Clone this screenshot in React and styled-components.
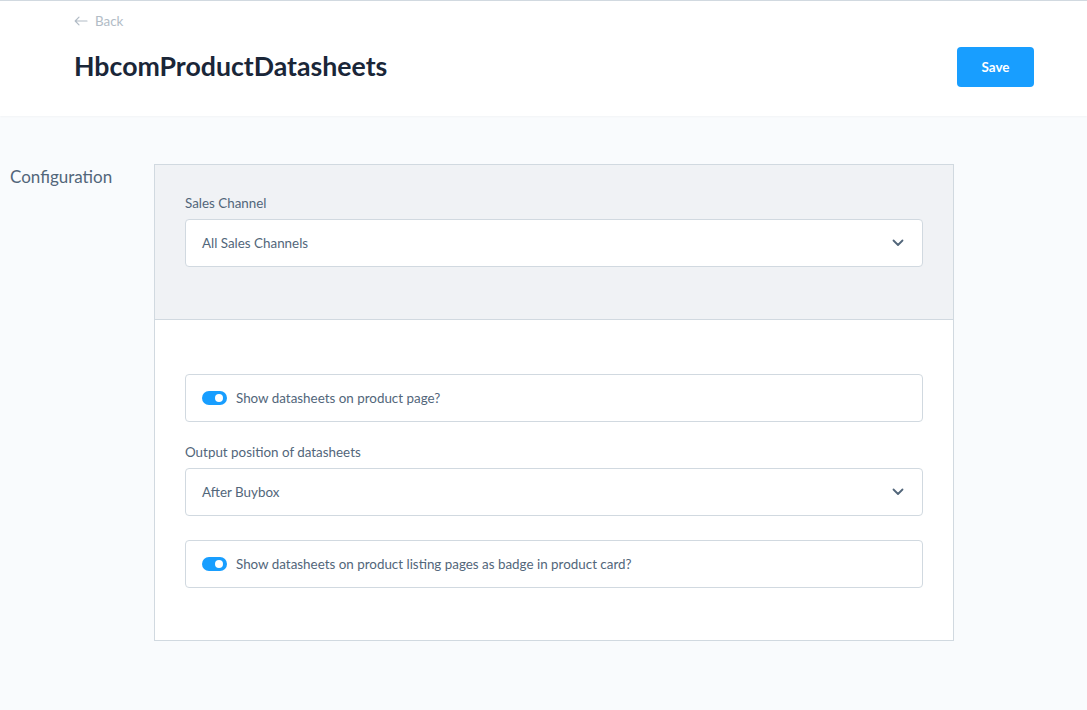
import React from 'react';
import styled, { createGlobalStyle } from 'styled-components';

const GlobalStyle = createGlobalStyle`
  html, body {
    margin: 0;
    padding: 0;
    background: #f9fafb;
    font-family: "Source Sans Pro", Lato, "Noto Sans", sans-serif;
    color: #52667a;
  }
  * { box-sizing: border-box; }
`;

const Page = styled.div`
  min-height: 710px;
  background: #f9fbfd;
  border-top: 1px solid #d1d9e0;
`;

const Header = styled.header`
  height: 115px;
  background: #ffffff;
  box-shadow: 0 1px 2px rgba(0, 0, 0, 0.03);
  padding: 12px 53px 0 74px;
  display: flex;
  justify-content: space-between;
  align-items: flex-start;
`;

const HeaderLeft = styled.div`
  display: flex;
  flex-direction: column;
`;

const BackLink = styled.a`
  display: flex;
  align-items: center;
  gap: 7px;
  font-size: 13.4px;
  color: #b2bcc6;
  height: 16px;
  text-decoration: none;
`;

const Title = styled.h1`
  margin: 21px 0 0;
  font-size: 26.7px;
  font-weight: 700;
  color: #1a2638;
`;

const SaveButton = styled.button`
  margin-top: 34px;
  width: 77px;
  height: 40px;
  border: none;
  border-radius: 4px;
  background: #189eff;
  color: #ffffff;
  font-family: inherit;
  font-size: 13.4px;
  font-weight: 700;
  cursor: pointer;
`;

const Content = styled.main`
  display: flex;
  padding: 48px 0 0 10px;
`;

const SideLabel = styled.div`
  width: 144px;
  font-size: 17px;
  color: #52667a;
  padding-top: 2px;
`;

const Card = styled.div`
  width: 800px;
  border: 1px solid #d1d9e0;
  background: #ffffff;
`;

const Section = styled.div`
  background: ${p => (p.$muted ? '#f0f2f5' : '#ffffff')};
  border-bottom: ${p => (p.$muted ? '1px solid #d1d9e0' : 'none')};
  padding: ${p => p.$pad};
  display: flex;
  flex-direction: column;
`;

const FieldLabel = styled.label`
  font-size: 13.4px;
  color: #52667a;
  margin-bottom: 8px;
  line-height: 16px;
`;

const Select = styled.div`
  height: 48px;
  border: 1px solid #d1d9e0;
  border-radius: 4px;
  background: #ffffff;
  display: flex;
  align-items: center;
  justify-content: space-between;
  padding: 0 18px 0 16px;
  font-size: 13.4px;
  color: #52667a;
  margin-bottom: ${p => p.$mb || 0}px;
`;

const ToggleRow = styled.div`
  height: 48px;
  border: 1px solid #d1d9e0;
  border-radius: 4px;
  background: #ffffff;
  display: flex;
  align-items: center;
  gap: 9px;
  padding: 0 16px;
  font-size: 13.4px;
  color: #52667a;
  margin-bottom: ${p => p.$mb || 0}px;
`;

const Switch = styled.span`
  position: relative;
  width: 25px;
  height: 14px;
  border-radius: 7px;
  background: #189eff;
  flex-shrink: 0;

  &::after {
    content: '';
    position: absolute;
    top: 3px;
    right: 4px;
    width: 8px;
    height: 8px;
    border-radius: 50%;
    background: #ffffff;
  }
`;

const Chevron = () => (
  <svg width="12" height="8" viewBox="0 0 12 8" fill="none">
    <path d="M1.5 1.5L6 6l4.5-4.5" stroke="#52667a" strokeWidth="1.8" strokeLinecap="round" strokeLinejoin="round" />
  </svg>
);

const BackArrow = () => (
  <svg width="14" height="10" viewBox="0 0 14 10" fill="none">
    <path d="M13 5H1.5M5 1.2L1.2 5 5 8.8" stroke="#b2bcc6" strokeWidth="1.2" strokeLinecap="round" strokeLinejoin="round" />
  </svg>
);

const App = () => (
  <>
    <GlobalStyle />
    <Page>
      <Header>
        <HeaderLeft>
          <BackLink>
            <BackArrow />
            Back
          </BackLink>
          <Title>HbcomProductDatasheets</Title>
        </HeaderLeft>
        <SaveButton>Save</SaveButton>
      </Header>

      <Content>
        <SideLabel>Configuration</SideLabel>
        <Card>
          <Section $muted $pad="30px 30px 52px">
            <FieldLabel>Sales Channel</FieldLabel>
            <Select>
              All Sales Channels
              <Chevron />
            </Select>
          </Section>
          <Section $pad="54px 30px 52px">
            <ToggleRow $mb={22}>
              <Switch />
              Show datasheets on product page?
            </ToggleRow>
            <FieldLabel>Output position of datasheets</FieldLabel>
            <Select $mb={24}>
              After Buybox
              <Chevron />
            </Select>
            <ToggleRow>
              <Switch />
              Show datasheets on product listing pages as badge in product card?
            </ToggleRow>
          </Section>
        </Card>
      </Content>
    </Page>
  </>
);

export default App;
